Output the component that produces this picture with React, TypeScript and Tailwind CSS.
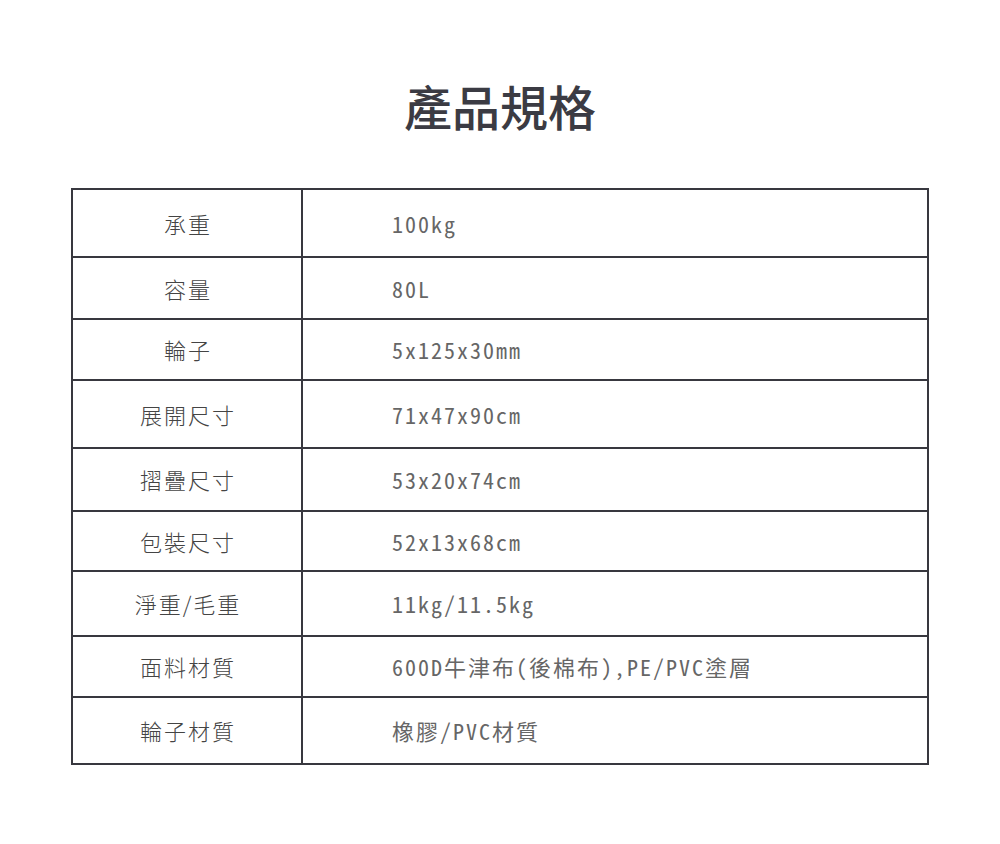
const rows: { label: string; value: string; h: string }[] = [
  { label: '承重', value: '100kg', h: 'h-[68px]' },
  { label: '容量', value: '80L', h: 'h-[62px]' },
  { label: '輪子', value: '5x125x30mm', h: 'h-[61px]' },
  { label: '展開尺寸', value: '71x47x90cm', h: 'h-[68px]' },
  { label: '摺疊尺寸', value: '53x20x74cm', h: 'h-[63px]' },
  { label: '包裝尺寸', value: '52x13x68cm', h: 'h-[60px]' },
  { label: '淨重/毛重', value: '11kg/11.5kg', h: 'h-[65px]' },
  { label: '面料材質', value: '600D牛津布(後棉布),PE/PVC塗層', h: 'h-[61px]' },
  { label: '輪子材質', value: '橡膠/PVC材質', h: 'h-[65px]' },
];

const SpecTable = () => {
  return (
    <div className="mx-[71px] border-2 border-[#38383f]">
      {rows.map((row, i) => (
        <div
          key={row.label}
          className={`flex ${row.h} ${i < rows.length - 1 ? 'border-b-2 border-[#38383f]' : ''}`}
        >
          <div className="w-[230px] flex items-center justify-center border-r-2 border-[#38383f] pl-[2px] font-['Noto_Sans_CJK_TC',sans-serif] font-light text-[#444]">
            {row.label}
          </div>
          <div className="flex-1 flex items-center pl-[89px] text-[#666]">{row.value}</div>
        </div>
      ))}
    </div>
  );
}

export default function App() {
  return (
    <div className="w-[1000px] h-[844px] bg-white font-['Noto_Sans_Mono_CJK_TC','Noto_Sans_CJK_TC',monospace]">
      <h1 className="pt-[74px] h-[188px] text-center text-[48px] leading-[62px] font-medium text-[#3b3b43] font-['Noto_Sans_CJK_TC',sans-serif]">
        產品規格
      </h1>
      <div className="text-[22px] tracking-[2px]">
        <SpecTable />
      </div>
    </div>
  );
}
